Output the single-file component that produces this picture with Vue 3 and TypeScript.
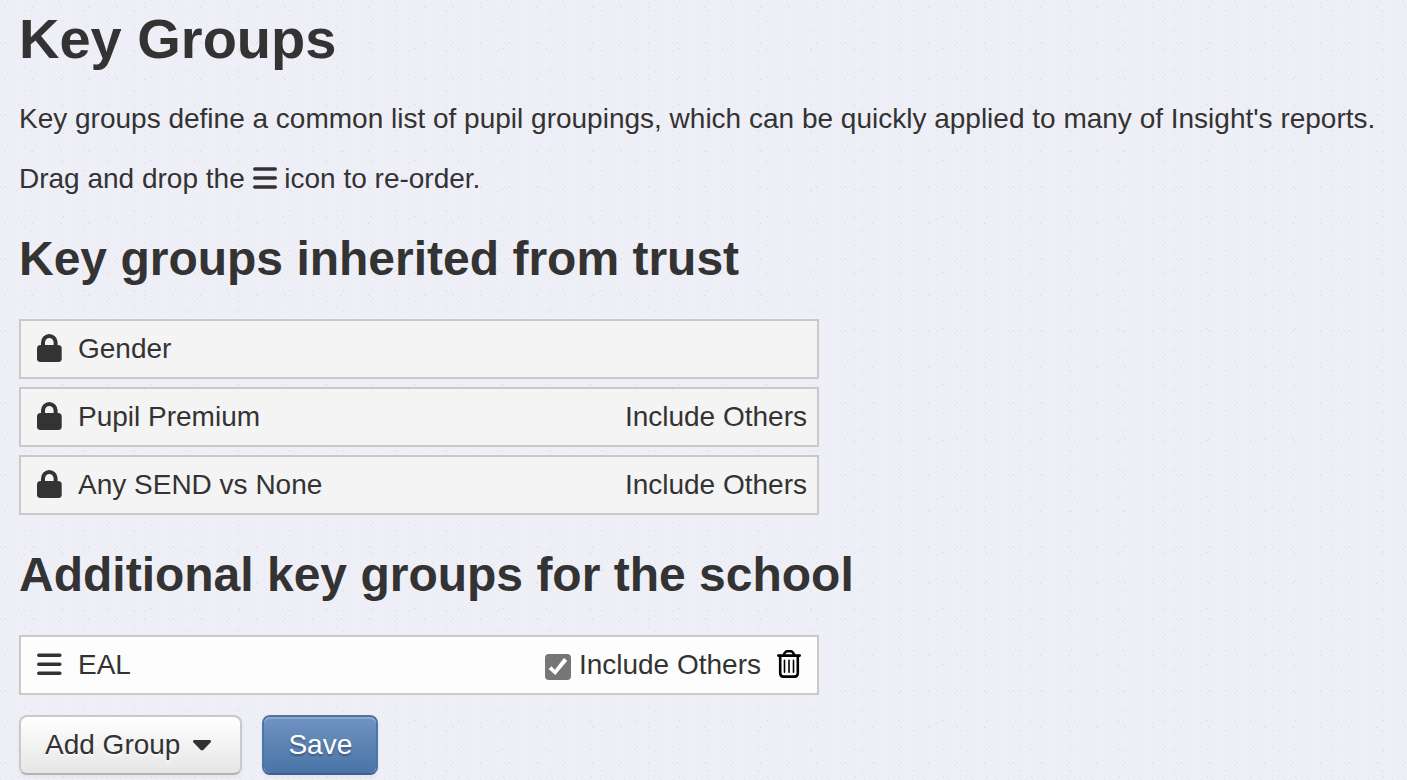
<script setup lang="ts">
import { ref } from 'vue'

interface InheritedGroup {
  name: string
  includeOthers: boolean
}

const inherited: InheritedGroup[] = [
  { name: 'Gender', includeOthers: false },
  { name: 'Pupil Premium', includeOthers: true },
  { name: 'Any SEND vs None', includeOthers: true },
]

const additional = ref([{ id: 'eal', name: 'EAL', includeOthers: true }])

function removeGroup(id: string) {
  additional.value = additional.value.filter((g) => g.id !== id)
}
</script>

<template>
  <main class="page">
    <h1>Key Groups</h1>
    <p>Key groups define a common list of pupil groupings, which can be quickly applied to many of Insight's reports.</p>
    <p>
      Drag and drop the
      <svg class="bars inline" viewBox="0 0 24 22" aria-hidden="true">
        <path d="M1.800 2h20.400M1.800 11h20.400M1.800 20h20.400" />
      </svg>
      icon to re-order.
    </p>

    <h2>Key groups inherited from trust</h2>
    <ul class="groups">
      <li v-for="group in inherited" :key="group.name" class="row locked">
        <svg class="lock" viewBox="0 0 26 30" aria-hidden="true">
          <path class="shackle" d="M7 13V8.500a6.300 6.500 0 0 1 12.600 0V13" />
          <rect x="1" y="11" width="24.700" height="17" rx="3.500" />
        </svg>
        <span class="name">{{ group.name }}</span>
        <span v-if="group.includeOthers">Include Others</span>
      </li>
    </ul>

    <h2>Additional key groups for the school</h2>
    <ul class="groups">
      <li v-for="group in additional" :key="group.id" class="row">
        <svg class="bars" viewBox="0 0 26 24" aria-hidden="true">
          <path d="M2.800 2.200h21M2.800 11.200h21M2.800 20.200h21" />
        </svg>
        <span class="name">{{ group.name }}</span>
        <label class="include" :for="`others-${group.id}`">
          <input :id="`others-${group.id}`" v-model="group.includeOthers" type="checkbox" />
          Include Others
        </label>
        <button class="remove" type="button" aria-label="Remove group" @click="removeGroup(group.id)">
          <svg viewBox="0 0 24 30" aria-hidden="true">
            <path class="thick" d="M1.300 5.600h21.400M6.300 5.200l1.900-2.800Q8.900 1.300 10 1.300h4q1.100 0 1.800 1.100L17.700 5.200" />
            <path class="thick" d="M3.200 6v17.200q0 3.400 3.400 3.400h10.800q3.400 0 3.400-3.400V6" />
            <path class="thin" d="M7.500 10.200v12M12 10.200v12M16.500 10.200v12" />
          </svg>
        </button>
      </li>
    </ul>

    <div class="actions">
      <button class="btn" type="button" aria-haspopup="menu">
        Add Group
        <svg class="caret" viewBox="0 0 18 11" aria-hidden="true">
          <path d="M1.500 0h15c1.400 0 2 1.400 1 2.500l-7 7.300c-.900.900-2.100.900-3 0L.500 2.500C-.500 1.400.100 0 1.500 0z" />
        </svg>
      </button>
      <button class="btn primary" type="button">Save</button>
    </div>
  </main>
</template>

<style>
body {
  background-color: #f0f0f8;
  background-image:
    conic-gradient(from 270deg at 2px 2px, rgba(226, 228, 228, 0.8) 90deg, transparent 0),
    conic-gradient(from 270deg at 2px 2px, rgba(228, 230, 230, 0.8) 90deg, transparent 0),
    conic-gradient(from 270deg at 2px 2px, rgba(228, 230, 230, 0.7) 90deg, transparent 0),
    conic-gradient(from 270deg at 2px 2px, rgba(232, 231, 243, 0.5) 90deg, transparent 0),
    conic-gradient(from 270deg at 2px 2px, rgba(235, 235, 243, 0.6) 90deg, transparent 0),
    conic-gradient(from 270deg at 2px 2px, rgba(235, 235, 243, 0.6) 90deg, transparent 0);
  background-position: 4px 6px, 18px 20px, 30px 10px, 0 2px, 2px 0, 0 2px;
  background-size: 28px 36px, 44px 28px, 52px 20px, 12px 8px, 4px 4px, 4px 4px;
}
</style>

<style scoped>
.page {
  box-sizing: border-box;
  padding: 0 19px 4px;
  color: #333;
  font-family: "Liberation Sans", Arial, Helvetica, sans-serif;
  font-size: 28px;
  line-height: 40px;
}
h1,
h2 {
  margin: 20px 0;
  font-weight: bold;
  line-height: 80px;
}
h1 {
  margin: 0 0 21px;
  font-size: 56px;
  line-height: 78px;
}
h2 {
  font-size: 48px;
}
p {
  margin: 0 0 20px;
}
.groups {
  display: flex;
  flex-direction: column;
  gap: 8px;
  max-width: 800px;
  margin: 0;
  padding: 0;
  list-style: none;
}
.row {
  box-sizing: border-box;
  display: flex;
  align-items: center;
  min-height: 60px;
  padding: 8px 10px 8px 15px;
  border: 2px solid #c9c9c9;
  background: #fdfdfd;
}
.row.locked {
  background: #f4f4f4;
}
.name {
  flex: 1;
  margin-left: 16px;
}
.lock {
  flex: none;
  width: 26px;
  height: 30px;
  fill: #333;
}
.shackle {
  fill: none;
  stroke: #333;
  stroke-width: 4;
}
.bars {
  flex: none;
  width: 26px;
  height: 24px;
  fill: none;
  stroke: #333;
  stroke-width: 3.6;
  stroke-linecap: round;
}
.bars.inline {
  width: 24px;
  height: 22px;
  vertical-align: -1px;
}
.include {
  display: flex;
  align-items: center;
  gap: 8px;
}
.include input {
  appearance: none;
  display: grid;
  place-items: center;
  width: 26px;
  height: 26px;
  margin: 4px 0 0;
  border-radius: 4px;
  background: #767676;
}
.include input:checked::before {
  content: "";
  width: 20px;
  height: 18px;
  background: #fff;
  clip-path: polygon(4% 61%, 18% 46%, 35% 65%, 80% 0, 97% 15%, 37% 95%);
}
.remove {
  display: flex;
  margin: 0 6px 0 16px;
  padding: 0;
  border: 0;
  background: none;
  cursor: pointer;
}
.remove svg {
  width: 24px;
  height: 30px;
  fill: none;
  stroke: #000;
  stroke-linecap: round;
}
.thick {
  stroke-width: 2.6;
}
.thin {
  stroke-width: 1.6;
}
.actions {
  display: flex;
  gap: 20px;
  margin-top: 20px;
}
.btn {
  display: flex;
  align-items: center;
  gap: 13px;
  padding: 8px 29px 8px 24px;
  border: 2px solid #c9c9c9;
  border-bottom-color: #b3b3b3;
  border-radius: 8px;
  background: linear-gradient(#fff, #e6e6e6) padding-box;
  box-shadow: inset 0 2px 0 rgba(255, 255, 255, 0.2), 0 2px 4px rgba(0, 0, 0, 0.05);
  color: #333;
  font: inherit;
  text-shadow: 0 2px 2px rgba(255, 255, 255, 0.75);
  cursor: pointer;
}
.caret {
  width: 18px;
  height: 11px;
  fill: #333;
}
.btn.primary {
  padding: 8px 24px;
  border-color: #4c74a5;
  border-bottom-color: #3d618d;
  background: linear-gradient(#6f93c1, #4a74a6) padding-box;
  color: #fff;
  text-shadow: 0 2px 2px rgba(0, 0, 0, 0.3);
}
</style>
